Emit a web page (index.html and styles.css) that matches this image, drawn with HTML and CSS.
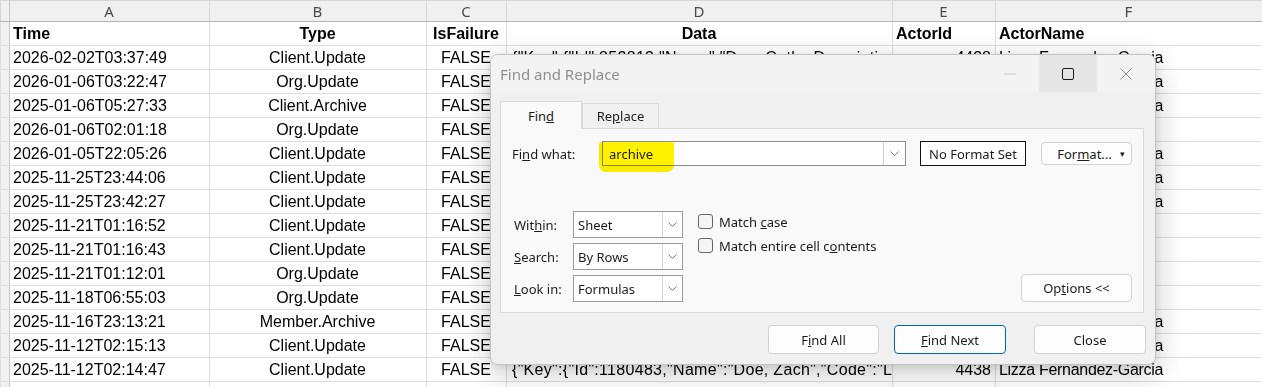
FILE: index.html
```html
<!DOCTYPE html>
<html lang="en">
<head>
    <meta charset="UTF-8">
    <meta name="viewport" content="width=device-width, initial-scale=1.0">
    <title>Find and Replace</title>
    <link rel="stylesheet" href="styles.css">
</head>
<body>
    <table class="sheet">
        <colgroup>
            <col class="c-rh"><col class="c-a"><col class="c-b"><col class="c-c"><col class="c-d"><col class="c-e"><col class="c-f">
        </colgroup>
        <tr class="letters">
            <th class="rh"></th><th>A</th><th>B</th><th>C</th><th>D</th><th>E</th><th>F</th>
        </tr>
        <tr class="head">
            <td class="rh"></td><td>Time</td><td class="mid">Type</td><td class="mid">IsFailure</td><td class="mid">Data</td><td>ActorId</td><td>ActorName</td>
        </tr>
        <tr>
            <td class="rh"></td><td>2026-02-02T03:37:49</td><td class="mid">Client.Update</td><td class="mid">FALSE</td><td class="json">{"Key":{"Id":852813,"Name":"Doe, Cathy Description"}}</td><td class="num">4438</td><td class="name">Lizza Fernandez-Garcia</td>
        </tr>
        <tr>
            <td class="rh"></td><td>2026-01-06T03:22:47</td><td class="mid">Org.Update</td><td class="mid">FALSE</td><td class="json">{"Key":{"Id":40211,"Name":"North Branch"}}</td><td class="num">4438</td><td class="name">Lizza Fernandez-Garcia</td>
        </tr>
        <tr>
            <td class="rh"></td><td>2025-01-06T05:27:33</td><td class="mid">Client.Archive</td><td class="mid">FALSE</td><td class="json">{"Key":{"Id":977120,"Name":"Doe, Jane"}}</td><td class="num">4438</td><td class="name">Lizza Fernandez-Garcia</td>
        </tr>
        <tr>
            <td class="rh"></td><td>2026-01-06T02:01:18</td><td class="mid">Org.Update</td><td class="mid">FALSE</td><td class="json">{"Key":{"Id":40211,"Name":"North Branch"}}</td><td></td><td></td>
        </tr>
        <tr>
            <td class="rh"></td><td>2026-01-05T22:05:26</td><td class="mid">Client.Update</td><td class="mid">FALSE</td><td class="json">{"Key":{"Id":1022318,"Name":"Doe, Mark"}}</td><td class="num">4438</td><td class="name">Lizza Fernandez-Garcia</td>
        </tr>
        <tr>
            <td class="rh"></td><td>2025-11-25T23:44:06</td><td class="mid">Client.Update</td><td class="mid">FALSE</td><td class="json">{"Key":{"Id":1180483,"Name":"Doe, Zach"}}</td><td class="num">4438</td><td class="name">Lizza Fernandez-Garcia</td>
        </tr>
        <tr>
            <td class="rh"></td><td>2025-11-25T23:42:27</td><td class="mid">Client.Update</td><td class="mid">FALSE</td><td class="json">{"Key":{"Id":1180483,"Name":"Doe, Zach"}}</td><td class="num">4438</td><td class="name">Lizza Fernandez-Garcia</td>
        </tr>
        <tr>
            <td class="rh"></td><td>2025-11-21T01:16:52</td><td class="mid">Client.Update</td><td class="mid">FALSE</td><td class="json">{"Key":{"Id":1175090,"Name":"Doe, Ann"}}</td><td></td><td></td>
        </tr>
        <tr>
            <td class="rh"></td><td>2025-11-21T01:16:43</td><td class="mid">Client.Update</td><td class="mid">FALSE</td><td class="json">{"Key":{"Id":1175090,"Name":"Doe, Ann"}}</td><td></td><td></td>
        </tr>
        <tr>
            <td class="rh"></td><td>2025-11-21T01:12:01</td><td class="mid">Org.Update</td><td class="mid">FALSE</td><td class="json">{"Key":{"Id":40211,"Name":"North Branch"}}</td><td></td><td></td>
        </tr>
        <tr>
            <td class="rh"></td><td>2025-11-18T06:55:03</td><td class="mid">Org.Update</td><td class="mid">FALSE</td><td class="json">{"Key":{"Id":40211,"Name":"North Branch"}}</td><td></td><td></td>
        </tr>
        <tr>
            <td class="rh"></td><td>2025-11-16T23:13:21</td><td class="mid">Member.Archive</td><td class="mid">FALSE</td><td class="json">{"Key":{"Id":66410,"Name":"Doe, Tim"}}</td><td class="num">4438</td><td class="name">Lizza Fernandez-Garcia</td>
        </tr>
        <tr>
            <td class="rh"></td><td>2025-11-12T02:15:13</td><td class="mid">Client.Update</td><td class="mid">FALSE</td><td class="json">{"Key":{"Id":1180483,"Name":"Doe, Zach"}}</td><td class="num">4438</td><td class="name">Lizza Fernandez-Garcia</td>
        </tr>
        <tr>
            <td class="rh"></td><td>2025-11-12T02:14:47</td><td class="mid">Client.Update</td><td class="mid">FALSE</td><td class="json">{"Key":{"Id":1180483,"Name":"Doe, Zach","Code":"LX-204"}}</td><td class="num">4438</td><td class="name">Lizza Fernandez-Garcia</td>
        </tr>
        <tr>
            <td class="rh"></td><td></td><td></td><td></td><td></td><td></td><td></td>
        </tr>
    </table>

    <div class="dialog">
        <div class="titlebar">
            <div class="title">Find and Replace</div>
            <div class="winbtn">
                <svg width="12" height="2" viewBox="0 0 12 2"><line x1="0" y1="1" x2="12" y2="1" stroke="#c9c9c9" stroke-width="1"/></svg>
            </div>
            <div class="winbtn hover">
                <svg width="12" height="12" viewBox="0 0 12 12"><rect x="0.5" y="0.5" width="11" height="11" rx="1.5" fill="none" stroke="#1b1b1b" stroke-width="1"/></svg>
            </div>
            <div class="winbtn">
                <svg width="12" height="12" viewBox="0 0 12 12"><path d="M0.5 0.5 L11.5 11.5 M11.5 0.5 L0.5 11.5" stroke="#8a8a8a" stroke-width="1"/></svg>
            </div>
        </div>

        <div class="body">
            <div class="tabs">
                <div class="tab active"><span>Fin<u>d</u></span></div>
                <div class="tab"><span>Re<u>p</u>lace</span></div>
            </div>

            <div class="panel">
                <div class="findrow">
                    <div class="label">Fi<u>n</u>d what:</div>
                    <div class="combo">
                        <span class="value">archive</span>
                        <span class="drop">
                            <svg width="9" height="5" viewBox="0 0 9 5"><polyline points="0.5,0.5 4.5,4.5 8.5,0.5" fill="none" stroke="#7a7a7a" stroke-width="1"/></svg>
                        </span>
                        <span class="marker"></span>
                    </div>
                    <div class="noformat">No Format Set</div>
                    <div class="btn format"><span>For<u>m</u>at...</span><span class="caret">&#9662;</span></div>
                </div>

                <div class="opts">
                    <div class="fields">
                        <div class="label">Wit<u>h</u>in:</div>
                        <div class="select"><span>Sheet</span><span class="drop"><svg width="9" height="5" viewBox="0 0 9 5"><polyline points="0.5,0.5 4.5,4.5 8.5,0.5" fill="none" stroke="#7a7a7a" stroke-width="1"/></svg></span></div>
                        <div class="label"><u>S</u>earch:</div>
                        <div class="select"><span>By Rows</span><span class="drop"><svg width="9" height="5" viewBox="0 0 9 5"><polyline points="0.5,0.5 4.5,4.5 8.5,0.5" fill="none" stroke="#7a7a7a" stroke-width="1"/></svg></span></div>
                        <div class="label"><u>L</u>ook in:</div>
                        <div class="select"><span>Formulas</span><span class="drop"><svg width="9" height="5" viewBox="0 0 9 5"><polyline points="0.5,0.5 4.5,4.5 8.5,0.5" fill="none" stroke="#7a7a7a" stroke-width="1"/></svg></span></div>
                    </div>
                    <div class="checks">
                        <div class="check"><span class="box"></span><span>Match <u>c</u>ase</span></div>
                        <div class="check"><span class="box"></span><span>Match entire cell c<u>o</u>ntents</span></div>
                    </div>
                    <div class="btn options"><span>Op<u>t</u>ions &lt;&lt;</span></div>
                </div>
            </div>

            <div class="actions">
                <div class="btn"><span>F<u>i</u>nd All</span></div>
                <div class="btn primary"><span><u>F</u>ind Next</span></div>
                <div class="btn close"><span>Close</span></div>
            </div>
        </div>
    </div>
</body>
</html>
```

FILE: styles.css
```css
* {
    margin: 0;
    padding: 0;
    box-sizing: border-box;
}

body {
    width: 1262px;
    height: 387px;
    overflow: hidden;
    position: relative;
    background: #fff;
    font-family: "Liberation Sans", Arial, sans-serif;
}

/* spreadsheet */
.sheet {
    border-collapse: collapse;
    table-layout: fixed;
    width: 1262px;
    font-size: 16px;
    color: #000;
}

.c-rh { width: 9px; }
.c-a { width: 200px; }
.c-b { width: 217px; }
.c-c { width: 80px; }
.c-d { width: 386px; }
.c-e { width: 103px; }
.c-f { width: 267px; }

.sheet tr {
    height: 24px;
}

.sheet td,
.sheet th {
    border: 1px solid #dedede;
    white-space: nowrap;
    overflow: hidden;
    padding: 0 4px 0 3px;
    text-align: left;
    font-weight: normal;
}

.sheet .letters {
    height: 21px;
}

.letters th {
    background: #f0f0f0;
    font-family: "Noto Sans", sans-serif;
    font-size: 15px;
    color: #4a4a4a;
    text-align: center;
    border-color: #d6d6d6;
    border-bottom: 1px solid #b4b4b4;
    line-height: 19px;
}

.sheet .rh {
    background: #f0f0f0;
    border-right-color: #c8c8c8;
    padding: 0;
}

.head td {
    font-weight: bold;
    padding-top: 1px;
}

.sheet .mid {
    text-align: center;
}

.sheet .num {
    text-align: right;
}

.sheet .json {
    padding-left: 5px;
    letter-spacing: 0.3px;
}

.sheet .name {
    letter-spacing: -0.3px;
}

/* dialog */
.dialog {
    position: absolute;
    left: 490px;
    top: 54px;
    width: 666px;
    height: 311px;
    background: #f0f0f0;
    border: 1px solid #c4c4c4;
    border-radius: 8px;
    box-shadow: 0 8px 30px rgba(0, 0, 0, 0.22), 0 2px 6px rgba(0, 0, 0, 0.08);
    font-family: "Noto Sans", sans-serif;
    font-size: 13px;
    color: #1b1b1b;
    overflow: hidden;
    display: flex;
    flex-direction: column;
}

.titlebar {
    height: 37px;
    display: flex;
    align-items: center;
    background: #f3f3f3;
}

.title {
    flex: 1;
    padding-left: 9px;
    font-size: 15px;
    color: #8f8f8f;
}

.winbtn {
    width: 58px;
    height: 37px;
    display: flex;
    align-items: center;
    justify-content: center;
}

.winbtn.hover {
    background: #e5e5e5;
}

.body {
    flex: 1;
    padding: 9px 11px 0 9px;
}

.tabs {
    display: flex;
    align-items: flex-end;
    height: 27px;
}

.tab {
    width: 77px;
    height: 25px;
    display: flex;
    align-items: center;
    justify-content: center;
    border: 1px solid #dadada;
    border-bottom: none;
    background: #f0f0f0;
}

.tab.active {
    width: 82px;
    height: 28px;
    margin-bottom: -1px;
    background: #f9f9f9;
    position: relative;
    z-index: 1;
}

.panel {
    width: 644px;
    height: 185px;
    border: 1px solid #dadada;
    background: #f9f9f9;
    padding: 12px 11px 12px 11px;
    display: flex;
    flex-direction: column;
}

.findrow {
    display: flex;
    align-items: center;
    height: 25px;
}

.findrow .label {
    width: 90px;
}

.combo {
    position: relative;
    width: 304px;
    height: 25px;
    background: #fff;
    border: 1px solid #8c8c8c;
    display: flex;
    align-items: center;
}

.combo .value {
    flex: 1;
    padding-left: 6px;
}

.drop {
    width: 22px;
    height: 100%;
    border-left: 1px solid #d0d0d0;
    display: flex;
    align-items: center;
    justify-content: center;
}

.marker {
    position: absolute;
    left: -4px;
    top: 0;
    width: 75px;
    height: 30px;
    background: #fff200;
    border-radius: 2px 2px 7px 7px;
    mix-blend-mode: multiply;
}

.noformat {
    margin-left: 14px;
    width: 106px;
    height: 25px;
    border: 1px solid #111;
    background: #fff;
    display: flex;
    align-items: center;
    justify-content: center;
}

.btn {
    height: 28px;
    background: #fdfdfd;
    border: 1px solid #d2d2d2;
    border-radius: 4px;
    display: flex;
    align-items: center;
    justify-content: center;
}

.btn.format {
    margin-left: 15px;
    width: 91px;
    height: 23px;
    position: relative;
    padding-right: 4px;
}

.caret {
    position: absolute;
    right: 6px;
    font-size: 9px;
    color: #222;
}

.opts {
    flex: 1;
    margin-top: 45px;
    display: flex;
    align-items: flex-start;
}

.fields {
    display: grid;
    grid-template-columns: 61px 110px;
    grid-auto-rows: 27px;
    row-gap: 5px;
    align-items: center;
}

.fields .label {
    padding-left: 2px;
}

.select {
    height: 27px;
    background: #fff;
    border: 1px solid #9a9a9a;
    display: flex;
    align-items: center;
}

.select span:first-child {
    flex: 1;
    padding-left: 4px;
}

.select .drop {
    width: 20px;
    border-left-color: #d8d8d8;
}

.checks {
    margin-left: 15px;
    margin-top: 3px;
}

.check {
    display: flex;
    align-items: center;
    height: 15px;
    margin-bottom: 9px;
}

.box {
    width: 15px;
    height: 15px;
    border: 1px solid #676767;
    border-radius: 3px;
    background: #f5f5f5;
    margin-right: 6px;
}

.btn.options {
    margin-left: auto;
    align-self: flex-end;
    width: 111px;
}

.actions {
    display: flex;
    justify-content: flex-end;
    margin-top: 12px;
    margin-right: -2px;
}

.actions .btn {
    width: 111px;
    height: 29px;
}

.actions .primary {
    width: 112px;
    margin-left: 15px;
    border-color: #0067c0;
}

.actions .close {
    width: 112px;
    margin-left: 28px;
}
```
